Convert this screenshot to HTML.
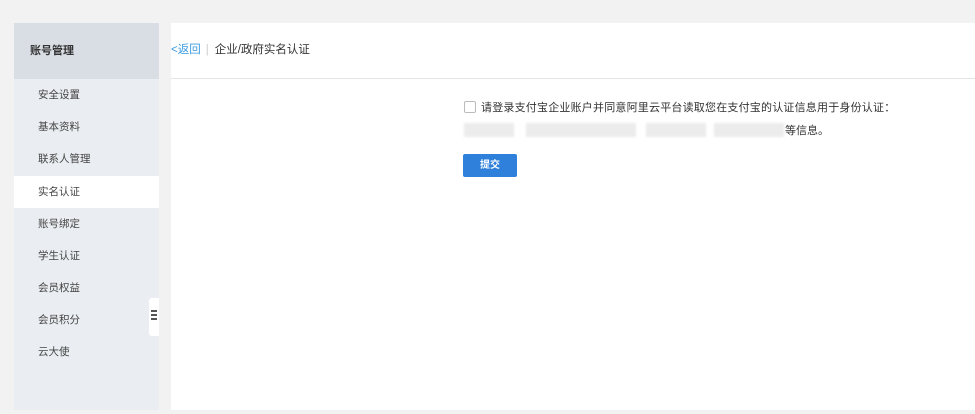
<!DOCTYPE html>
<html><head><meta charset="utf-8"><style>
*{margin:0;padding:0;box-sizing:border-box}
body{width:975px;height:414px;background:#f2f2f3;position:relative;overflow:hidden;font-family:"Liberation Sans","Noto Sans CJK SC",sans-serif;color:#333}
.side{position:absolute;left:14px;top:23px;width:145px;height:387px;background:#eaedf1}
.sh{height:56px;background:#d9dde4;font-size:11px;font-weight:bold;line-height:56px;padding-left:16px;color:#333}
.it{position:absolute;left:0;width:145px;height:32px;line-height:32px;padding-left:24px;font-size:10.5px;color:#444}
.act{background:#fff}
.tab{position:absolute;left:149px;top:298px;width:10px;height:38px;background:#fff;border-radius:3px 0 0 3px}
.main{position:absolute;left:171px;top:23px;width:804px;height:387px;background:#fff}
.hd{height:56px;border-bottom:1px solid #e3e5e8;font-size:11.5px;line-height:54px;color:#333}
.blur{position:absolute;top:0;height:14px;background:#ececec;filter:blur(1px)}
</style></head><body>
<div class="side">
<div class="sh">账号管理</div>
<div class="it" style="top:56px">安全设置</div>
<div class="it" style="top:88px">基本资料</div>
<div class="it" style="top:120px">联系人管理</div>
<div class="it act" style="top:153px">实名认证</div>
<div class="it" style="top:185px">账号绑定</div>
<div class="it" style="top:217px">学生认证</div>
<div class="it" style="top:249px">会员权益</div>
<div class="it" style="top:281px">会员积分</div>
<div class="it" style="top:313px">云大使</div>
</div>
<div class="tab"><div style="position:absolute;left:2px;top:12px;width:6px;height:2px;background:#555"></div><div style="position:absolute;left:2px;top:16px;width:6px;height:2px;background:#555"></div><div style="position:absolute;left:2px;top:20px;width:6px;height:2px;background:#555"></div></div>
<div class="main">
<div class="hd"><span style="color:#3a9be0">&lt;返回</span><span style="color:#ccc;margin:0 6px 0 5px">|</span>企业/政府实名认证</div>
<div style="position:absolute;left:293px;top:78px;width:12px;height:12px;border:1px solid #bbb;border-radius:2px"></div>
<div style="position:absolute;left:310px;top:76px;font-size:11px;color:#333;white-space:nowrap;letter-spacing:0.2px">请登录支付宝企业账户并同意阿里云平台读取您在支付宝的认证信息用于身份认证：</div>
<div style="position:absolute;left:293px;top:100px;width:330px;height:16px">
<div class="blur" style="left:0;width:50px"></div>
<div class="blur" style="left:62px;width:110px"></div>
<div class="blur" style="left:182px;width:60px"></div>
<div class="blur" style="left:250px;width:70px"></div>
</div>
<div style="position:absolute;left:614px;top:100px;font-size:11px;line-height:16px;white-space:nowrap">等信息。</div>
<div style="position:absolute;left:292px;top:131px;width:54px;height:23px;background:#2f80da;border-radius:2px;color:#fff;font-size:10px;font-weight:bold;line-height:23px;text-align:center">提交</div>
</div>
</body></html>
